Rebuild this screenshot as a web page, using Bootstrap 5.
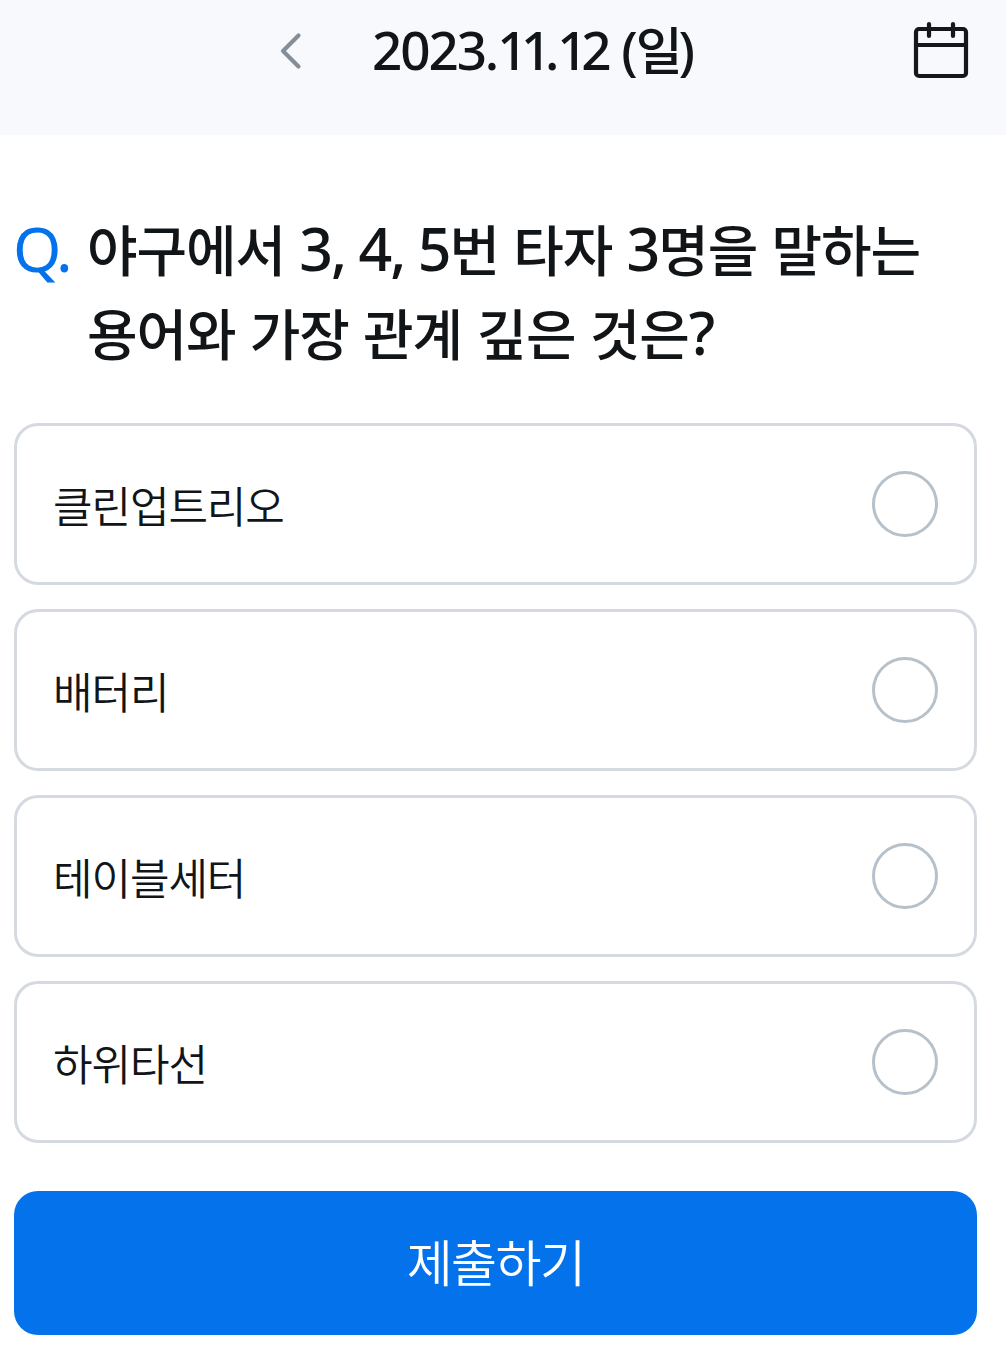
<!DOCTYPE html>
<html lang="ko">
<head>
<meta charset="utf-8">
<meta name="viewport" content="width=device-width, initial-scale=1">
<title>오늘의 퀴즈</title>
<link href="https://cdn.jsdelivr.net/npm/bootstrap@5.3.0/dist/css/bootstrap.min.css" rel="stylesheet">
<style>
body{font-family:"Noto Sans CJK KR",sans-serif;color:#111518;background:#fff}
.quiz-header{height:135px;background:#f8f9fd;display:grid;grid-template-columns:304px 1fr auto;padding-right:36px}
.quiz-header>*{height:101px}
.latin{font-family:"Noto Sans","Noto Sans CJK KR",sans-serif}
.date-text{font-size:51px;font-weight:500;letter-spacing:-4px;line-height:96px;white-space:nowrap;padding-left:68px}
.date-num{font-size:53px;letter-spacing:-2.1px}
.one{letter-spacing:-6.4px}
.quiz-main{padding:70px 29px 0 14px}
.q-mark{width:74px;margin-left:-1px;font-size:62px;line-height:86px;color:#0472eb;letter-spacing:-3px}
.q-text{font-size:55px;line-height:84px;font-weight:500;letter-spacing:-1.1px;white-space:nowrap}
.q-text .latin{font-size:59px;line-height:1;letter-spacing:-2px;font-weight:500}
.options{margin-top:50px;gap:24px}
.option{height:162px;border:3px solid #d5dae1;border-radius:24px;padding:0 36px;font-size:43px;font-weight:350;letter-spacing:-1.1px;line-height:60px}
.option span{margin-top:-1px}
.option input{appearance:none;width:66px;height:66px;border:3px solid #b7c1ca;border-radius:50%;margin:0;background:#fff}
.submit,.submit:hover{height:144px;margin-top:48px;border:0;border-radius:24px;background:#0472eb;color:#fff;font-size:50px;font-weight:350;letter-spacing:-1.6px}
.submit span{margin-top:-6px}
</style>
</head>
<body>
<header class="quiz-header">
  <button class="btn border-0 p-0 d-flex align-items-center justify-content-end" aria-label="이전">
    <svg width="24" height="40" viewBox="0 0 24 40" fill="none" stroke="#858e96" stroke-width="4.2" stroke-linecap="round" stroke-linejoin="round"><path d="M18.5 4.5 3 20 18.5 35.5"/></svg>
  </button>
  <div class="date-text"><span class="latin date-num">2023.<span class="one">11</span>.<span class="one">1</span>2 (</span>일<span class="latin date-num">)</span></div>
  <button class="btn border-0 p-0 d-flex align-items-center justify-content-end" aria-label="달력">
    <svg width="58" height="60" viewBox="0 0 58 60" fill="none" stroke="#14181b" stroke-width="4.2" stroke-linecap="round"><rect x="4" y="8" width="50" height="47" rx="3"/><path d="M4 24H54M17 3V15M41 3V15"/></svg>
  </button>
</header>
<main class="quiz-main">
  <div class="d-flex">
    <div class="latin q-mark">Q.</div>
    <h1 class="q-text m-0">야구에서 <span class="latin">3, 4, 5</span>번 타자 <span class="latin">3</span>명을 말하는<br>용어와 가장 관계 깊은 것은<span class="latin">?</span></h1>
  </div>
  <div class="options d-flex flex-column">
    <label class="option d-flex align-items-center justify-content-between"><span>클린업트리오</span><input type="radio" name="answer"></label>
    <label class="option d-flex align-items-center justify-content-between"><span>배터리</span><input type="radio" name="answer"></label>
    <label class="option d-flex align-items-center justify-content-between"><span>테이블세터</span><input type="radio" name="answer"></label>
    <label class="option d-flex align-items-center justify-content-between"><span>하위타선</span><input type="radio" name="answer"></label>
  </div>
  <button class="btn submit w-100 d-flex align-items-center justify-content-center p-0"><span>제출하기</span></button>
</main>
<script src="https://cdn.jsdelivr.net/npm/bootstrap@5.3.0/dist/js/bootstrap.bundle.min.js"></script>
</body>
</html>
